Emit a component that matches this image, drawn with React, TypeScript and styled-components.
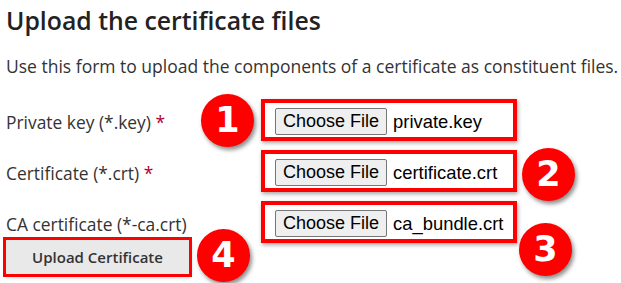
import React from "react";
import styled, { createGlobalStyle } from "styled-components";

const GlobalStyle = createGlobalStyle`
  html, body { margin: 0; padding: 0; background: #ffffff; }
  body { font-family: "Open Sans", "Noto Sans", sans-serif; }
  * { box-sizing: border-box; }
`;

const Page = styled.div`
  position: relative;
  width: 621px;
  height: 283px;
  padding: 4px 0 0 6px;
  overflow: hidden;
`;

const Heading = styled.h1`
  margin: 0;
  font-family: "Open Sans", sans-serif;
  font-weight: 600;
  font-size: 24.8px;
  line-height: 32px;
  color: #222222;
`;

const Intro = styled.p`
  margin: 18px 0 0;
  font-size: 17.5px;
  line-height: 24px;
  color: #333333;
  white-space: nowrap;
`;

const Form = styled.div`
  margin-top: 21px;
  display: grid;
  grid-template-columns: 255px 256px;
  row-gap: 9px;
  align-items: start;
`;

const LabelCell = styled.div`
  display: flex;
  flex-direction: column;
  align-items: flex-start;
  padding-top: 11px;
`;

const Label = styled.label`
  font-size: 17.4px;
  line-height: 24px;
  color: #333333;
  white-space: nowrap;
`;

const Required = styled.span`
  color: #b3002d;
`;

const FileBox = styled.div`
  height: 42px;
  display: flex;
  align-items: flex-start;
  gap: 6px;
  padding: 5px 0 0 10px;
  border: 4px solid #ff0000;
  box-shadow: 1px 2px 4px rgba(0, 0, 0, 0.35);
  background: #ffffff;
`;

const ChooseButton = styled.span`
  display: inline-flex;
  align-items: center;
  height: 27px;
  padding: 0 7px;
  background: #efefef;
  border: 1px solid #767676;
  border-radius: 2px;
  font-family: "Liberation Sans", Arial, sans-serif;
  font-size: 18px;
  color: #000000;
  white-space: nowrap;
`;

const FileName = styled.span`
  font-family: "Liberation Sans", Arial, sans-serif;
  font-size: 18.4px;
  line-height: 27px;
  color: #000000;
  white-space: nowrap;
`;

const SubmitButton = styled.button`
  margin-top: 4px;
  width: 183px;
  height: 34px;
  border: none;
  background: #e9e9e9;
  outline: 3px solid #ff0000;
  box-shadow: 1px 2px 5px rgba(0, 0, 0, 0.35);
  font-family: "Open Sans", sans-serif;
  font-weight: 600;
  font-size: 15px;
  color: #333333;
  padding: 0;
`;

const Badge = styled.div<{ $x: number; $y: number }>`
  position: absolute;
  left: ${(p) => p.$x}px;
  top: ${(p) => p.$y}px;
  width: 53px;
  height: 53px;
  border-radius: 50%;
  background: #fe0000;
  box-shadow: 2px 3px 4px rgba(0, 0, 0, 0.45);
  display: flex;
  align-items: center;
  justify-content: center;
  font-family: "DejaVu Sans", Verdana, sans-serif;
  font-weight: bold;
  font-size: 35px;
  line-height: 1;
  color: #ffffff;
`;

const rows = [
  { label: "Private key (*.key)", required: true, file: "private.key" },
  { label: "Certificate (*.crt)", required: true, file: "certificate.crt" },
  { label: "CA certificate (*-ca.crt)", required: false, file: "ca_bundle.crt" },
];

const badges = [
  { n: 1, x: 201, y: 94 },
  { n: 2, x: 522, y: 148 },
  { n: 3, x: 519, y: 223 },
  { n: 4, x: 197, y: 229 },
];

export default function App() {
  return (
    <>
      <GlobalStyle />
      <Page>
        <Heading>Upload the certificate files</Heading>
        <Intro>Use this form to upload the components of a certificate as constituent files.</Intro>
        <Form>
          {rows.map((r, i) => (
            <React.Fragment key={r.file}>
              <LabelCell>
                <Label>
                  {r.label}
                  {r.required && <Required> *</Required>}
                </Label>
                {i === rows.length - 1 && <SubmitButton>Upload Certificate</SubmitButton>}
              </LabelCell>
              <FileBox>
                <ChooseButton>Choose File</ChooseButton>
                <FileName>{r.file}</FileName>
              </FileBox>
            </React.Fragment>
          ))}
        </Form>
        {badges.map((b) => (
          <Badge key={b.n} $x={b.x} $y={b.y}>
            {b.n}
          </Badge>
        ))}
      </Page>
    </>
  );
}
